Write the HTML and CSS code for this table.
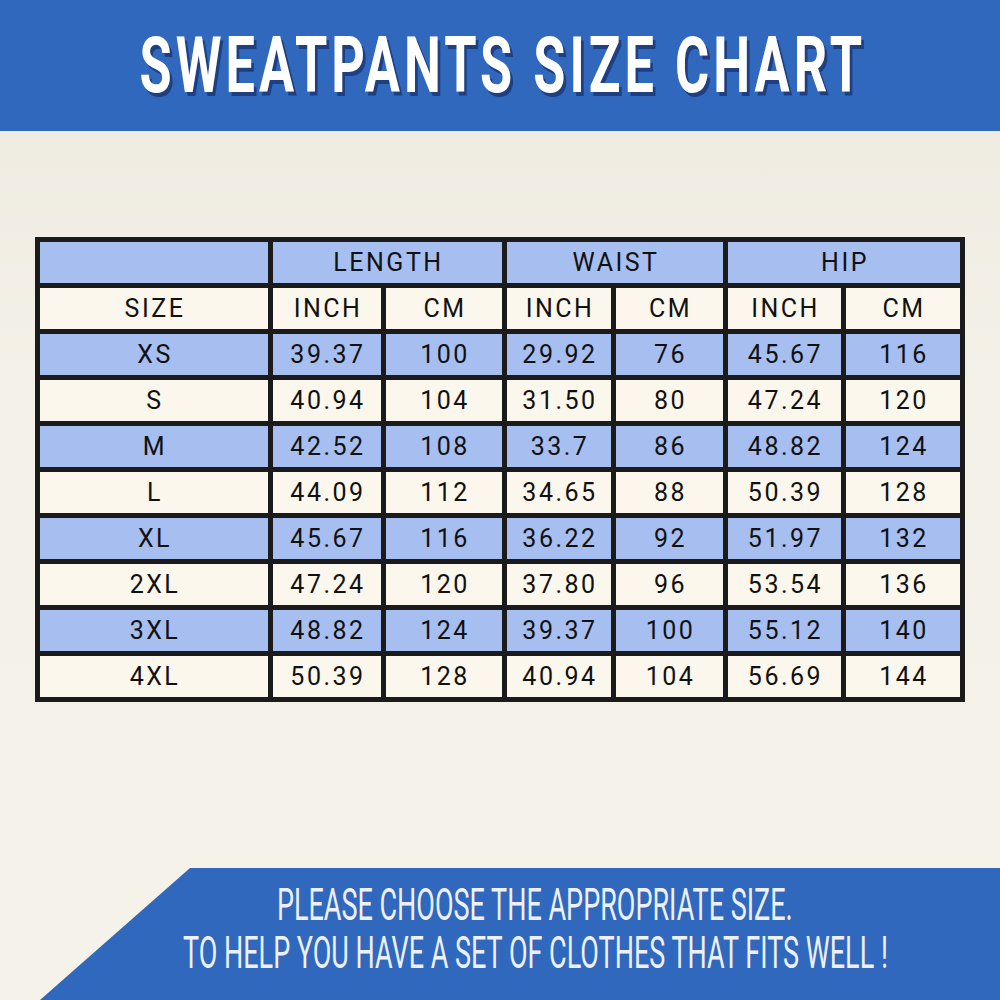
FILE: index.html
```html
<!DOCTYPE html>
<html lang="en">
<head>
<meta charset="utf-8">
<title>Sweatpants Size Chart</title>
<link rel="stylesheet" href="styles.css">
</head>
<body>
<div class="page">
  <header class="banner">
    <h1 class="title"><span>SWEATPANTS SIZE CHART</span></h1>
  </header>
  <main class="chart">
    <div class="grid">
      <div class="cell blue"></div>
      <div class="cell blue span2">LENGTH</div>
      <div class="cell blue span2">WAIST</div>
      <div class="cell blue span2">HIP</div>

      <div class="cell cream">SIZE</div>
      <div class="cell cream">INCH</div><div class="cell cream">CM</div>
      <div class="cell cream">INCH</div><div class="cell cream">CM</div>
      <div class="cell cream">INCH</div><div class="cell cream">CM</div>

      <div class="cell blue">XS</div><div class="cell blue">39.37</div><div class="cell blue">100</div><div class="cell blue">29.92</div><div class="cell blue">76</div><div class="cell blue">45.67</div><div class="cell blue">116</div>
      <div class="cell cream">S</div><div class="cell cream">40.94</div><div class="cell cream">104</div><div class="cell cream">31.50</div><div class="cell cream">80</div><div class="cell cream">47.24</div><div class="cell cream">120</div>
      <div class="cell blue">M</div><div class="cell blue">42.52</div><div class="cell blue">108</div><div class="cell blue">33.7</div><div class="cell blue">86</div><div class="cell blue">48.82</div><div class="cell blue">124</div>
      <div class="cell cream">L</div><div class="cell cream">44.09</div><div class="cell cream">112</div><div class="cell cream">34.65</div><div class="cell cream">88</div><div class="cell cream">50.39</div><div class="cell cream">128</div>
      <div class="cell blue">XL</div><div class="cell blue">45.67</div><div class="cell blue">116</div><div class="cell blue">36.22</div><div class="cell blue">92</div><div class="cell blue">51.97</div><div class="cell blue">132</div>
      <div class="cell cream">2XL</div><div class="cell cream">47.24</div><div class="cell cream">120</div><div class="cell cream">37.80</div><div class="cell cream">96</div><div class="cell cream">53.54</div><div class="cell cream">136</div>
      <div class="cell blue">3XL</div><div class="cell blue">48.82</div><div class="cell blue">124</div><div class="cell blue">39.37</div><div class="cell blue">100</div><div class="cell blue">55.12</div><div class="cell blue">140</div>
      <div class="cell cream">4XL</div><div class="cell cream">50.39</div><div class="cell cream">128</div><div class="cell cream">40.94</div><div class="cell cream">104</div><div class="cell cream">56.69</div><div class="cell cream">144</div>
    </div>
  </main>
  <footer class="footer">
    <p class="note"><span>PLEASE CHOOSE THE APPROPRIATE SIZE.</span></p>
    <p class="note"><span>TO HELP YOU HAVE A SET OF CLOTHES THAT FITS WELL !</span></p>
  </footer>
</div>
</body>
</html>
```
FILE: styles.css
```css
* { box-sizing: border-box; }
html, body { margin: 0; padding: 0; }
body {
  width: 1000px;
  height: 1000px;
  overflow: hidden;
  background: linear-gradient(180deg, #ede9df 0%, #f4f1e8 40%, #f5f2ea 100%);
  font-family: Roboto, "Liberation Sans", sans-serif;
}
.page {
  width: 1000px;
  height: 1000px;
  display: flex;
  flex-direction: column;
}
.banner {
  height: 131px;
  background: #3068be;
  display: flex;
  align-items: center;
  justify-content: center;
}
.title {
  margin: 0;
  font-family: Roboto, "Liberation Sans", sans-serif;
  font-weight: 700;
  font-size: 78px;
  line-height: 1;
  color: #ffffff;
  letter-spacing: 6px;
  text-shadow: 4px 4px 0 #1f3f80;
  white-space: nowrap;
  transform: scaleX(0.67);
  padding-left: 8px;
}
.title span { display: inline-block; }
.chart {
  padding: 106px 0 0 35px;
}
.grid {
  width: 930px;
  display: grid;
  grid-template-columns: 228px 108px 116px 104px 107px 113px 114px;
  grid-auto-rows: 41px;
  gap: 5px;
  padding: 5px;
  background: #1b1b1b;
}
.cell {
  display: flex;
  align-items: center;
  justify-content: center;
  font-size: 25px;
  font-weight: 400;
  letter-spacing: 2.5px;
  color: #111111;
  padding-left: 2px;
}
.span2 { grid-column: span 2; }
.blue { background: #a6bef0; }
.cream { background: #fbf7ec; }
.footer {
  margin-top: auto;
  height: 132px;
  background: #3068be;
  clip-path: polygon(190px 0, 100% 0, 100% 100%, 40px 100%);
  display: flex;
  flex-direction: column;
  align-items: center;
  justify-content: center;
  gap: 2px;
  padding-left: 70px;
  padding-bottom: 10px;
}
.note {
  margin: 0;
  color: #eef0f7;
  font-family: Roboto, "Liberation Sans", sans-serif;
  font-weight: 400;
  font-size: 45px;
  line-height: 46px;
  white-space: nowrap;
  transform: scaleX(0.6);
}
```
